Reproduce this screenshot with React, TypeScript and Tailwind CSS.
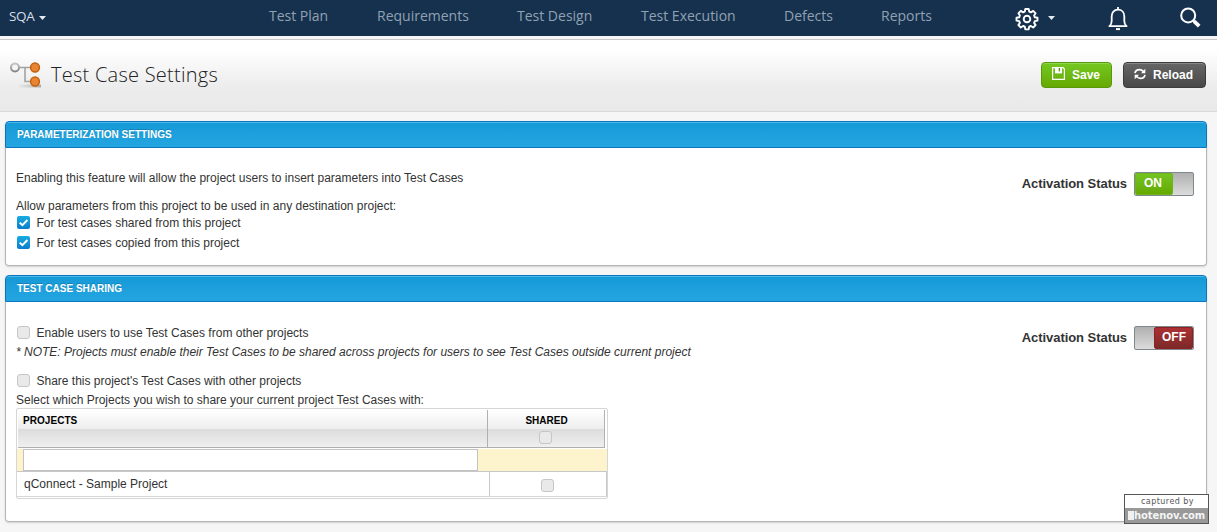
import type { ReactNode } from "react";

const NAV = [
  { label: "Test Plan", cls: "w-[108px]" },
  { label: "Requirements", cls: "w-[140px]" },
  { label: "Test Design", cls: "w-[124px]" },
  { label: "Test Execution", cls: "w-[143px]" },
  { label: "Defects", cls: "w-[97px]" },
  { label: "Reports", cls: "w-[134px]" },
];

function Caret() {
  return (
    <svg width="7" height="4" viewBox="0 0 7 4" fill="#e4eaf0">
      <path d="M0 0h7L3.5 4z" />
    </svg>
  );
}

function GearIcon() {
  return (
    <svg width="24" height="24" viewBox="0 0 24 24" fill="none" stroke="#fff" strokeWidth="1.9" strokeLinejoin="round">
      <path d="M10.3 2h3.4l.5 2.7 1.7.7 2.3-1.5 2.4 2.4-1.5 2.2.7 1.8 2.7.5v2.8l-2.7.5-.7 1.8 1.5 2.2-2.4 2.4-2.3-1.5-1.7.7-.5 2.7h-3.4l-.5-2.7-1.7-.7-2.3 1.5-2.4-2.4 1.5-2.2-.7-1.8-2.7-.5v-2.8l2.7-.5.7-1.8-1.5-2.2 2.4-2.4 2.3 1.5 1.7-.7z" />
      <circle cx="12" cy="12" r="3.3" />
    </svg>
  );
}

function BellIcon() {
  return (
    <svg width="20" height="24" viewBox="0 0 20 24" fill="none" stroke="#fff" strokeWidth="1.8">
      <path d="M10 0v2.5" />
      <path d="M1.4 19.2c2-1.6 2.3-3.2 2.3-5.2V9.3C3.7 5.5 6 2.6 10 2.6s6.3 2.9 6.3 6.7V14c0 2 .3 3.6 2.3 5.2z" strokeLinejoin="round" />
      <path d="M8 22.1h4" strokeWidth="2" />
    </svg>
  );
}

function SearchIcon() {
  return (
    <svg width="21" height="22" viewBox="0 0 21 22" fill="none" stroke="#fff">
      <circle cx="8.2" cy="8.4" r="7" strokeWidth="2" />
      <path d="M13 13.3l1.8 1.8" strokeWidth="2.4" />
      <path d="M14.2 14.4l5 4.8" strokeWidth="3.8" />
    </svg>
  );
}

function TreeIcon() {
  return (
    <svg width="34" height="28" viewBox="0 0 34 28" fill="none">
      <defs>
        <linearGradient id="ball" x1="0" y1="0" x2="0" y2="1">
          <stop offset="0" stopColor="#c4c4c4" />
          <stop offset="1" stopColor="#858585" />
        </linearGradient>
        <linearGradient id="shade" x1="0" x2="1">
          <stop offset="0" stopColor="#aaa" stopOpacity="0" />
          <stop offset="1" stopColor="#999" stopOpacity=".8" />
        </linearGradient>
      </defs>
      <path d="M7 22.5h24v3H7z" fill="url(#shade)" />
      <path d="M9 5.5h16M15 5.5v14h10" stroke="#a3a3a3" strokeWidth="1.6" />
      <circle cx="5" cy="5.5" r="4" fill="#f5f5f5" stroke="url(#ball)" strokeWidth="2" />
      <circle cx="25" cy="5.5" r="4.4" fill="#e98532" stroke="#c2610f" strokeWidth="1.5" />
      <circle cx="25" cy="19.5" r="4.4" fill="#e98532" stroke="#c2610f" strokeWidth="1.5" />
    </svg>
  );
}

function SaveIcon() {
  return (
    <svg width="13" height="13" viewBox="0 0 13 13" fill="none">
      <path d="M.6 .6h10.4l1.4 1.4v10.4H.6z" stroke="#fff" strokeWidth="1.2" />
      <path d="M3 1h7v5.4H3z" fill="#fff" />
      <path d="M6.7 1h1.4v3.4H6.7z" fill="#579a09" />
    </svg>
  );
}

function ReloadIcon() {
  return (
    <svg width="12" height="12" viewBox="0 0 12 12" fill="none" stroke="#fff" strokeWidth="1.7">
      <path d="M1 5.2C1.4 3 3.2 1.7 5.5 1.7c1.7 0 3 .8 4 1.8" />
      <path d="M11.3 .8v4.4H7z" fill="#fff" stroke="none" />
      <path d="M11 6.8c-.4 2.2-2.2 3.5-4.5 3.5-1.7 0-3-.8-4-1.8" />
      <path d="M.7 11.2V6.8H5z" fill="#fff" stroke="none" />
    </svg>
  );
}

function Checkbox({ checked = false }: { checked?: boolean }) {
  if (checked) {
    return (
      <span className="block h-[13px] w-[13px] shrink-0 rounded-[2px] bg-linear-to-b from-[#18ace0] to-[#0b7dcc]">
        <svg width="13" height="13" viewBox="0 0 13 13" fill="none" stroke="#fff" strokeWidth="2">
          <path d="M2.7 6.6l2.7 2.6 5-5.2" />
        </svg>
      </span>
    );
  }
  return <span className="block h-[13px] w-[13px] shrink-0 rounded-[3px] border border-[#c6c6c6] bg-[#e9e9e9]" />;
}

function CheckRow({ checked, children }: { checked?: boolean; children: ReactNode }) {
  return (
    <div className="flex h-5 items-start gap-[6.5px] pl-px">
      <span className="mt-[3px]">
        <Checkbox checked={checked} />
      </span>
      <span className="mt-[3px]">{children}</span>
    </div>
  );
}

function Panel({ title, className, children }: { title: string; className: string; children: ReactNode }) {
  return (
    <section className={`flex flex-col rounded-[4px] bg-white shadow-[0_1px_2px_rgba(0,0,0,0.15)] ${className}`}>
      <h2 className="h-[27px] shrink-0 rounded-t-[4px] border border-[#0d75bd] bg-linear-to-b from-[#159ad7] to-[#23a5e0] pl-[11px] text-[10px] leading-[25px] font-bold text-white shadow-[inset_0_1px_0_#4db8ea] [text-shadow:0_-1px_0_rgba(0,0,0,0.2)]">
        {title}
      </h2>
      <div className="flex flex-1 items-start justify-between rounded-b-[4px] border border-t-0 border-[#b4b4b4] pr-3 pl-[10px]">
        {children}
      </div>
    </section>
  );
}

function Activation({ on }: { on: boolean }) {
  return (
    <div className="mt-6 flex items-start">
      <span className="mr-[7px] text-[13px] leading-[23px] font-bold tracking-[-0.05px] text-[#333]">Activation Status</span>
      <div
        className={`flex h-6 w-[60px] rounded-[2px] border border-[#7e898e] bg-linear-to-b from-[#b0b0b0] to-[#dcdcdc] text-[12px] leading-[20px] font-bold text-white ${on ? "justify-start" : "justify-end"}`}
      >
        {on ? (
          <span className="h-[22px] w-[38px] rounded-[2px] border border-[#6fb51a] bg-linear-to-b from-[#73c420] to-[#66a900] pl-[8px] leading-[19px]">ON</span>
        ) : (
          <span className="h-[22px] w-[39px] rounded-[2px] border border-[#8d2023] bg-linear-to-b from-[#ad3033] to-[#7c2929] pl-[7px] leading-[19px]">OFF</span>
        )}
      </div>
    </div>
  );
}

function ProjectsTable() {
  return (
    <div className="h-[91px] w-[592px] rounded-[2px] border border-[#d6d6d6] pt-px">
      <div className="flex h-[38px] pr-[2px] pl-px text-[10px] leading-[12px] font-bold text-black">
        <div className="w-[470px] border-r border-b border-[#b0b0b0] bg-[linear-gradient(#fff_0,#ededed_19px,#dcdcdc_19px,#efefef_100%)] pt-[5px] pl-[5px] tracking-[0.05px]">
          PROJECTS
        </div>
        <div className="flex flex-1 flex-col items-center border-r border-b border-[#b0b0b0] bg-[linear-gradient(#fff_0,#ededed_19px,#dcdcdc_19px,#efefef_100%)] pt-[5px]">
          <span className="ml-px">SHARED</span>
          <span className="mt-[4px] mr-[2px]">
            <Checkbox />
          </span>
        </div>
      </div>
      <div className="mt-px h-[23px] border-b border-[#c8c8c8] bg-[#fdf3cc] pl-[6px]">
        <input aria-label="Filter projects" className="block h-[22px] w-[455px] border border-[#c2c2c2] bg-white px-1 outline-none" />
      </div>
      <div className="flex h-[25px] border-b border-[#d6d6d6]">
        <div className="w-[473px] border-r border-[#c8c8c8] pl-[7px] leading-[24px]">qConnect - Sample Project</div>
        <div className="flex flex-1 items-center justify-center border-r border-[#c8c8c8] pt-[3px] pr-[2px]">
          <Checkbox />
        </div>
      </div>
    </div>
  );
}

export default function App() {
  return (
    <div className="relative flex h-[532px] w-[1217px] flex-col overflow-hidden bg-[#f6f6f6] font-['Liberation_Sans',Arial,sans-serif] text-[12px] leading-[14px] whitespace-nowrap text-[#333]">
      <nav className="flex h-9 shrink-0 bg-[#15314e] font-['Open_Sans',sans-serif] text-[14px] leading-[32px] text-[#92a1b2]">
        <div className="flex w-[269px] items-start pl-[9px] text-[13.5px] text-[#d5dee7]">
          <span className="w-[26px] tracking-[-0.3px]">SQA</span>
          <span className="mt-4 ml-[4px]">
            <Caret />
          </span>
        </div>
        {NAV.map((item) => (
          <div key={item.label} className={item.cls}>
            {item.label}
          </div>
        ))}
        <div className="flex items-start pt-[7px]">
          <GearIcon />
          <span className="mt-[9px] ml-[9px]">
            <Caret />
          </span>
          <span className="ml-[53px]">
            <BellIcon />
          </span>
          <span className="ml-[52px]">
            <SearchIcon />
          </span>
        </div>
      </nav>
      <header className="mt-[3px] flex h-[73px] shrink-0 items-start border-t border-b border-t-[#c8c8c8] border-b-[#dadada] bg-[linear-gradient(#fff_0,#fff_10px,#ebebeb_50px,#e9e9e9_100%)] pl-[10px]">
        <span className="mt-[22px]">
          <TreeIcon />
        </span>
        <h1 className="mt-[21px] ml-[7px] font-['Open_Sans',sans-serif] text-[20px] leading-[28px] font-light tracking-[0.25px] text-[#222]">
          Test Case Settings
        </h1>
        <div className="mt-[22px] mr-[11px] ml-auto flex gap-[11px] text-[12px] font-bold text-white [text-shadow:0_1px_1px_rgba(0,0,0,0.4)]">
          <button className="flex h-[26px] w-[71px] items-center rounded-[4px] border border-[#57990c] bg-linear-to-b from-[#75c821] to-[#66a900] pl-[10px] shadow-[inset_0_1px_0_#90d650]">
            <span className="mb-[3px]">
              <SaveIcon />
            </span>
            <span className="ml-[7px]">Save</span>
          </button>
          <button className="flex h-[26px] w-[83px] items-center rounded-[4px] border border-[#3b3b3b] bg-linear-to-b from-[#666] to-[#484848] pl-[10px] shadow-[inset_0_1px_0_#888]">
            <span className="mb-[2px]">
              <ReloadIcon />
            </span>
            <span className="ml-[7px]">Reload</span>
          </button>
        </div>
      </header>
      <main className="flex flex-col gap-[9px] pt-[9px] pr-[10px] pl-[5px]">
        <Panel title="PARAMETERIZATION SETTINGS" className="h-[145px]">
          <div className="pt-[23px]">
            <p>Enabling this feature will allow the project users to insert parameters into Test Cases</p>
            <p className="mt-[14px]">Allow parameters from this project to be used in any destination project:</p>
            <CheckRow checked>For test cases shared from this project</CheckRow>
            <CheckRow checked>For test cases copied from this project</CheckRow>
          </div>
          <Activation on />
        </Panel>
        <Panel title="TEST CASE SHARING" className="h-[247px]">
          <div className="pt-[21px]">
            <CheckRow>Enable users to use Test Cases from other projects</CheckRow>
            <p className="mt-[2px] italic">
              * NOTE: Projects must enable their Test Cases to be shared across projects for users to see Test Cases outside current project
            </p>
            <div className="mt-[12px]">
              <CheckRow>Share this project's Test Cases with other projects</CheckRow>
            </div>
            <p className="mt-[2px] mb-[1px]">Select which Projects you wish to share your current project Test Cases with:</p>
            <ProjectsTable />
          </div>
          <Activation on={false} />
        </Panel>
      </main>
      <div className="absolute top-[494px] left-[1124px] h-[30px] w-[85px] border border-[#555] bg-white font-['DejaVu_Sans',sans-serif] text-[8px] text-[#555]">
        <div className="h-[13px] pl-[16px] leading-[13px] tracking-[0.45px]">captured by</div>
        <div className="flex h-[15px] items-center bg-[#999] pl-[3px] text-[10px] font-bold text-[#f4f4f4]">
          <span className="h-[9px] w-[6px] bg-[#f0f0f0]" />
          <span className="tracking-[-0.1px]">hotenov.com</span>
        </div>
      </div>
    </div>
  );
}
